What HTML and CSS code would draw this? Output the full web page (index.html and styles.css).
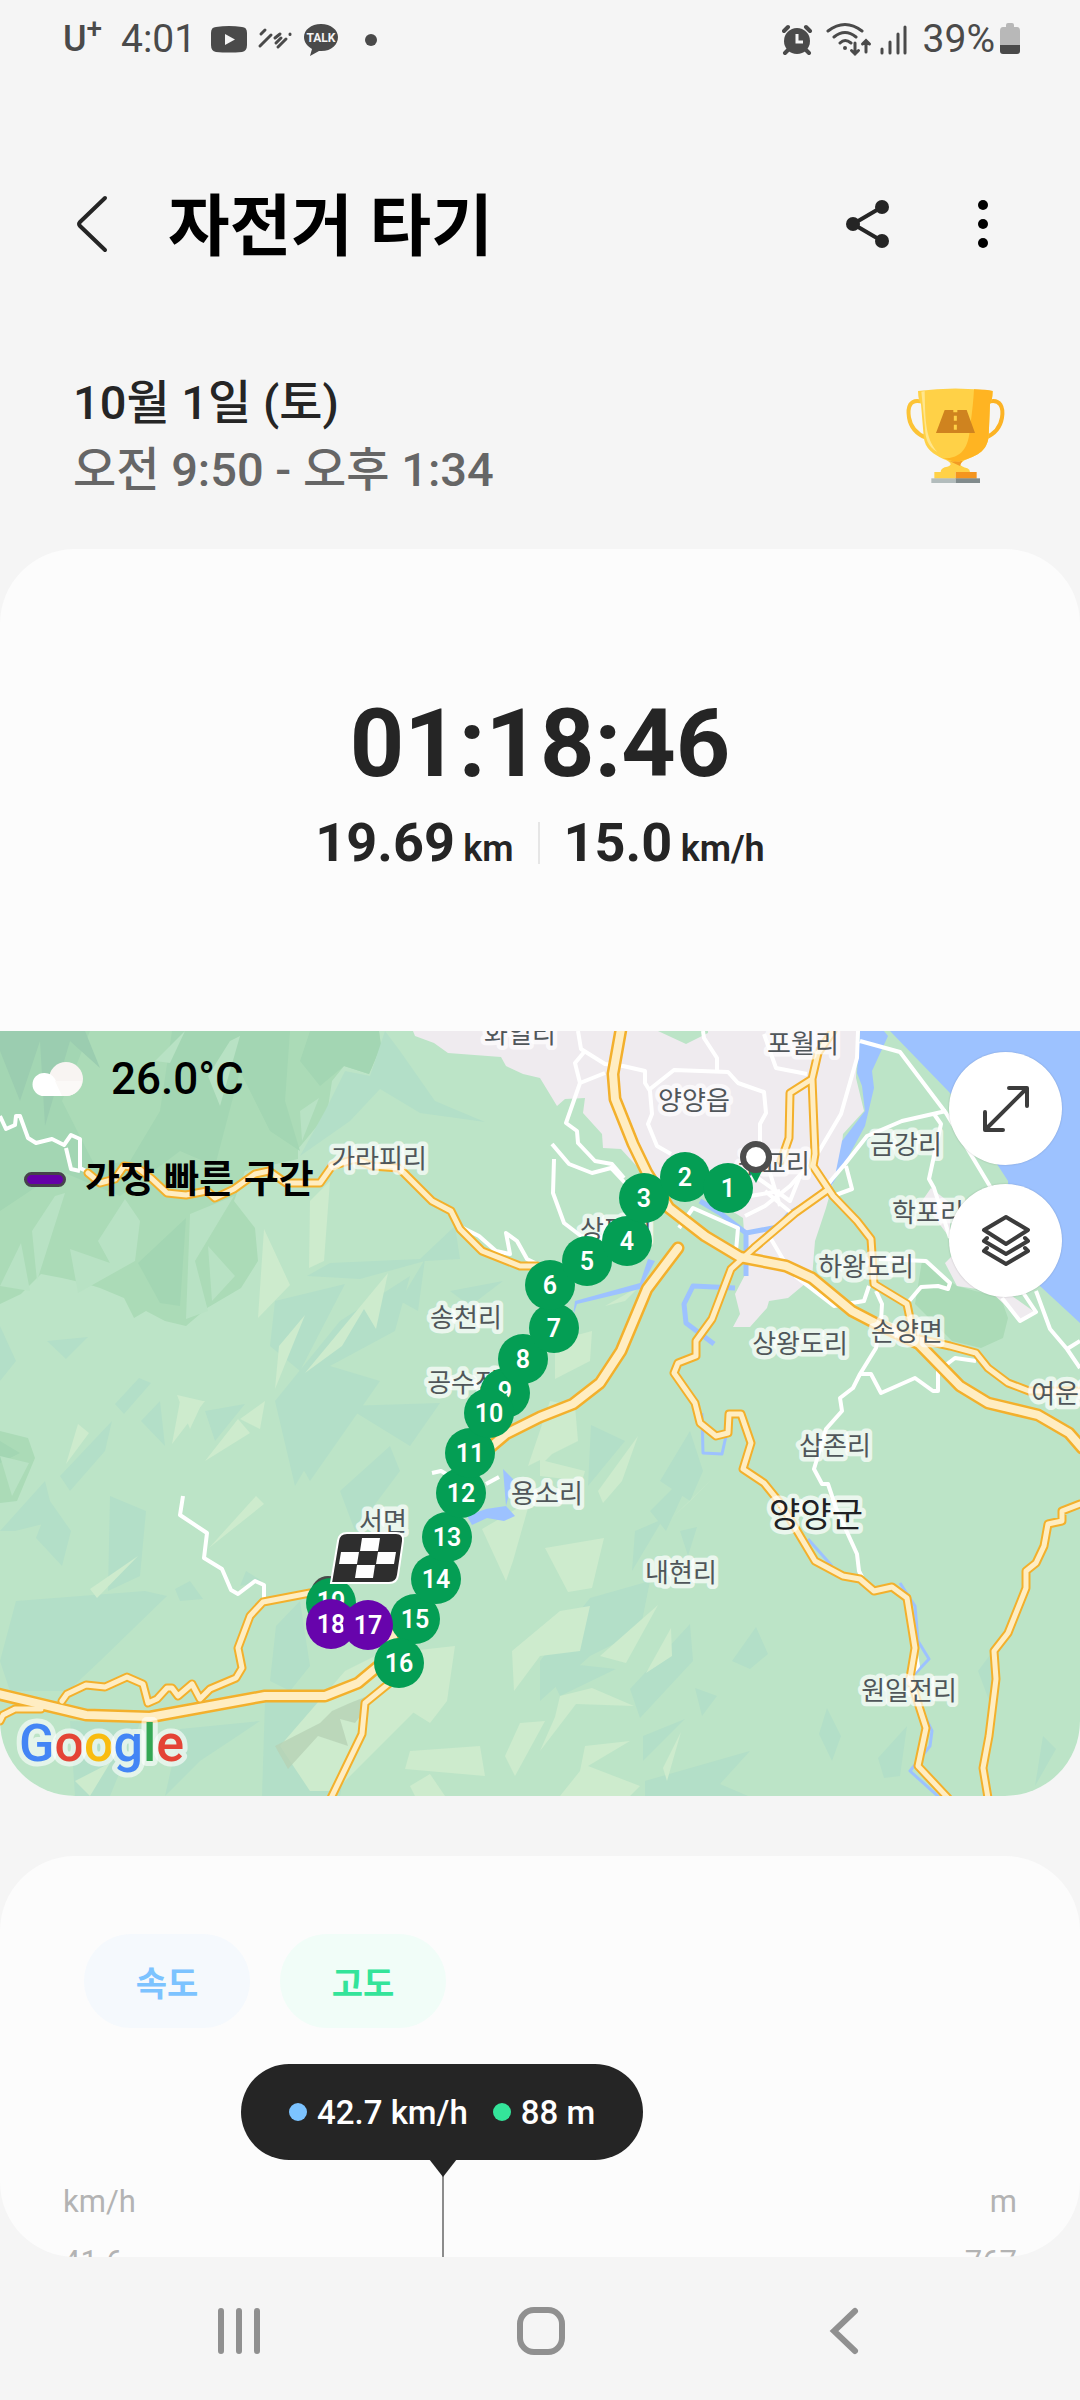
FILE: index.html
```html
<!DOCTYPE html>
<html lang="ko">
<head>
<meta charset="utf-8">
<meta name="viewport" content="width=device-width, initial-scale=1">
<title>자전거 타기</title>
<link rel="stylesheet" href="styles.css">
</head>
<body>
<div class="status">
  <div class="status-side">
    <span class="carrier">U<sup>+</sup></span>
    <span class="clock">4:01</span>
    <svg class="status-icons" width="170" height="36" viewBox="0 0 170 36" aria-hidden="true">
      <path fill="#4a4a4a" d="M5 6Q18 4 31 6Q36 6 36 12V24Q36 30 31 31Q18 32 5 31Q0 30 0 24V12Q0 6 5 6Z"/>
      <path fill="#f5f5f5" d="M14 13L24 18.500L14 24Z"/>
      <g stroke="#4a4a4a" stroke-width="3" stroke-linecap="round"><path d="M50 13L54 9M49 25L60 14M64 17L69 13M67 26L75 18M65 22L70 17M79 13V13.500"/></g>
      <path fill="#4a4a4a" d="M110 3C100 3 93 9 93 16C93 21 96 25 101 28L99 35L108 30C120 31 127 24 127 16C127 9 120 3 110 3Z"/>
      <text x="110" y="21" class="talk">TALK</text>
      <circle cx="160" cy="19" r="6" fill="#4a4a4a"/>
    </svg>
  </div>
  <div class="status-side">
    <svg class="status-icons" width="126" height="36" viewBox="0 0 126 36" aria-hidden="true">
      <g fill="none" stroke="#4a4a4a" stroke-linecap="round">
        <circle cx="15" cy="20" r="13" fill="#4a4a4a" stroke="none"/>
        <path stroke-width="4" d="M2 10L6 6M24 6L28 10M6 29L3 32M24 29L27 32"/>
        <path stroke="#f5f5f5" stroke-width="3" stroke-linecap="butt" d="M15 13V21H21"/>
        <path stroke-width="3" d="M46 10Q63 -3 80 10M52 16Q63 7 74 16M58 22Q63 17 69 22"/>
        <circle cx="63" cy="27" r="2" fill="#4a4a4a" stroke="none"/>
        <path stroke-width="3" d="M73 22V33M69.500 29.500L73 33L76.500 29.500M84 31V20M80.500 23L84 19.500L87.500 23M100 28V32M108 21V32M116 13V32M123 6V32"/>
      </g>
    </svg>
    <span class="clock">39%</span>
    <svg class="battery" width="20" height="36" viewBox="0 0 20 36" aria-hidden="true">
      <path fill="#b8b8b8" d="M6 4Q6 2 8 2H12Q14 2 14 4V6H17Q20 6 20 10V24H0V10Q0 6 3 6H6Z"/>
      <path fill="#4a4a4a" d="M0 24H20V30Q20 33 17 33H3Q0 33 0 30Z"/>
    </svg>
  </div>
</div>

<header class="appbar">
  <button class="icon-button" type="button" aria-label="뒤로">
    <svg width="40" height="60" viewBox="0 0 40 60"><path d="M33 4L8 28Q6 30 8 32L33 56" fill="none" stroke="#252525" stroke-width="4" stroke-linecap="round"/></svg>
  </button>
  <h1 class="title">자전거 타기</h1>
  <button class="icon-button share" type="button" aria-label="공유">
    <svg width="50" height="54" viewBox="0 0 50 54"><path d="M40 10L11 27L40 44" fill="none" stroke="#252525" stroke-width="4"/><g fill="#252525"><circle cx="40" cy="10" r="7"/><circle cx="11" cy="27" r="7"/><circle cx="40" cy="44" r="7"/></g></svg>
  </button>
  <button class="icon-button" type="button" aria-label="더보기">
    <svg width="50" height="54" viewBox="0 0 50 54"><circle cx="25" cy="8" r="5"/><circle cx="25" cy="27" r="5"/><circle cx="25" cy="46" r="5"/></svg>
  </button>
</header>

<section class="session">
  <div class="session-text">
    <p class="date">10월 1일 (토)</p>
    <p class="period">오전 9:50 - 오후 1:34</p>
  </div>
  <svg class="trophy" viewBox="0 0 390 390" role="img" aria-label="트로피">
    <g fill="none" stroke="#fcc335" stroke-width="12"><path d="M92 91C60 84 52 108 57 140C62 170 82 190 108 200"/></g>
    <path d="M300 91C330 84 341 108 336 140C331 170 312 190 286 200" fill="none" stroke="#fcb325" stroke-width="12"/>
    <path fill="#ffd147" d="M84 60Q196 45 308 60Q307 90 300 100L296 195C292 240 262 252 232 264Q214 272 210 280Q214 288 232 292Q240 296 240 303H152Q152 294 164 289Q182 286 182 279Q178 270 160 264C132 250 104 236 101 195L93 100Q85 90 84 60Z"/>
    <path fill="#ffb422" d="M252 55Q290 55 308 60Q307 90 300 100L296 195C292 240 262 252 232 264Q214 270 195 272Q175 268 160 262C215 262 236 230 240 170Q250 100 252 55Z"/>
    <path fill="#f29b24" d="M178 270Q200 274 218 269Q212 276 210 285Z"/>
    <path fill="#ffe68c" d="M94 62L104 60C106 140 104 200 142 243C112 225 106 200 105 170Z"/>
    <path fill="#cf831f" d="M164 117H190V124H202V117H230L255 186H138Z"/>
    <path stroke="#ffd147" stroke-width="9" d="M196 134V149M196 161V176"/>
    <path fill="#ffd147" d="M133 303H197V323H133Z"/><path fill="#f4951f" d="M197 303H260V323H197Z"/>
    <path fill="#b2bcbc" d="M124 322H197V336H124Z"/><path fill="#818b8c" d="M197 322H270V336H197Z"/>
  </svg>
</section>

<main class="content">
<section class="card summary">
  <div class="totals">
    <p class="duration">01:18:46</p>
    <div class="metrics">
      <p class="metric">19.69 <span class="unit">km</span></p>
      <span class="divider"></span>
      <p class="metric">15.0 <span class="unit">km/h</span></p>
    </div>
  </div>
  <div class="map">
    <svg class="map-canvas" viewBox="0 1030 1080 765" role="img" aria-label="경로 지도">
      <rect y="1030" width="1080" height="765" fill="#bce4c7"/>
      <!-- wooded hills -->
      <path fill="#abdbb7" d="M0 1030H379L381 1045L369 1073L344 1065L332 1080L327 1113L298 1148V1158L245 1170L234 1200L255 1227L258 1260L241 1287L207 1307L186 1325L165 1320L146 1310L134 1317L124 1297L100 1287L84 1282L62 1277L41 1273L21 1293L0 1303ZM0 1430L28 1437L35 1457L17 1500L0 1502ZM922 1260L915 1303L952 1340L981 1347L1003 1337L1008 1317L1001 1297L957 1285Z"/>
      <path fill="#a3d6b3" d="M0 1030H90L62 1100L95 1165L130 1160L160 1110L172 1030H290L285 1100L300 1150L270 1130L240 1070L215 1165L180 1150L120 1195L60 1170L0 1210ZM310 1030H379L381 1045L369 1073L344 1065L320 1085L300 1060ZM138 1262L186 1217L180 1305L160 1302ZM0 1440L20 1452L0 1462Z"/>
      <path fill="#9bcdb0" d="M0 1030H85L100 1067L70 1040L45 1125L40 1040L20 1100L0 1050Z"/>
      <path fill="#b8e2c4" d="M32 1230L55 1195L65 1192L37 1280ZM98 1240L125 1198L140 1220L135 1260L78 1292L70 1248L110 1262ZM0 1285L21 1242L30 1290ZM190 1213L234 1195L195 1260L208 1310L186 1318ZM208 1245L235 1275L212 1300ZM0 1455L29 1462L12 1495ZM300 1110L319 1097L302 1140ZM230 1040L240 1035L220 1105L208 1075ZM155 1060L185 1030L170 1062Z"/>
      <!-- blue-green facets -->
      <path fill="#b3dfc8" d="M385 1030L400 1050L435 1100L485 1121L420 1112L380 1088L350 1120L300 1155L325 1110L345 1070L370 1075ZM307 1275L330 1262L420 1258L455 1225L460 1258L425 1260L360 1278ZM275 1300L345 1283L300 1370L270 1345ZM47 1340L88 1336L66 1358ZM0 1325L16 1360L0 1380ZM340 1320L410 1275L395 1330L330 1365L380 1380L310 1480L290 1445L275 1400ZM400 1300L425 1258L418 1310ZM450 1290L503 1280L470 1305ZM115 1403L139 1377L151 1382L124 1413ZM60 1475L112 1420L105 1450L70 1490ZM0 1530L45 1480L55 1520L15 1530ZM36 1537L50 1500L71 1530L62 1565ZM110 1495L146 1510L140 1575L108 1590ZM16 1600L145 1590L167 1595L100 1660L68 1690H10L0 1660ZM141 1420L160 1400L165 1445ZM205 1410L245 1403L215 1440ZM275 1400H345L295 1485ZM345 1405L440 1402L410 1445ZM340 1490L390 1445L400 1470L355 1530ZM175 1588L190 1580L203 1598L180 1600ZM240 1585L246 1570L262 1580ZM276 1625L300 1600L310 1665L290 1690L270 1680ZM70 1720L140 1722L110 1795H75ZM265 1700L360 1690L340 1795H262ZM180 1728L260 1720L200 1760L165 1795ZM591 1424L625 1440L588 1485ZM660 1480L690 1430L703 1470L690 1500ZM650 1510L680 1480L690 1478L666 1530ZM635 1530L663 1518L632 1570ZM680 1530L697 1526L688 1555ZM590 1597L650 1580L640 1630L590 1655L540 1700V1660ZM630 1688L690 1623L693 1660L640 1717ZM543 1660L616 1668L560 1695ZM732 1660L756 1626L768 1653L750 1668ZM695 1687L717 1695L702 1715ZM819 1733L827 1707L841 1735L832 1760ZM878 1757L907 1725L900 1775L884 1777ZM643 1735L685 1718L643 1760ZM645 1780L750 1750L720 1783L748 1795H645ZM978 1670L993 1650V1710ZM1035 1785L1043 1735L1056 1748Z"/>
      <!-- light facets -->
      <path fill="#cdebcd" d="M310 1200L330 1180L324 1260L309 1267ZM264 1228L290 1284L258 1317ZM305 1372L388 1272L376 1328L364 1308L342 1345ZM275 1388L279 1345L305 1314ZM177 1394L203 1400L190 1428ZM240 1418L265 1400L260 1428ZM66 1463L78 1423L89 1432ZM180 1400L205 1400L172 1443ZM205 1460L238 1418L250 1432ZM209 1547L256 1495L264 1503ZM90 1588L138 1555L97 1597ZM280 1745L345 1670L385 1650L425 1700L335 1790H310ZM410 1650L455 1645L447 1700L430 1722L395 1700ZM482 1528L530 1500L513 1560L506 1580ZM528 1465L550 1400L575 1405L578 1440ZM540 1440L560 1445L545 1460L585 1470L582 1480L540 1475ZM512 1650L560 1610L590 1605L580 1650L540 1655L514 1690ZM545 1547L604 1537L592 1587L568 1591ZM598 1490L638 1435L622 1480L603 1502ZM671 1518L712 1478L690 1500ZM600 1655L658 1604L626 1662ZM646 1672L671 1627L672 1655ZM560 1695L592 1687L634 1705L576 1703L540 1750L555 1716ZM410 1750L480 1745L485 1775L405 1768ZM505 1755L520 1722L545 1720L515 1775ZM585 1745L630 1740L588 1765L640 1785L630 1795H560L580 1770ZM410 1785L430 1773L445 1795H415ZM605 1305L640 1285L625 1300ZM555 1340L592 1330L590 1360L555 1378ZM663 1767L681 1731L667 1780ZM75 1780L110 1762L90 1795Z"/>
      <path fill="#b7d2b5" d="M275 1745L320 1722L332 1710L350 1702L380 1690L355 1722L340 1718L348 1745L318 1735L288 1768Z" opacity=".8"/>
      <!-- built-up area -->
      <path fill="#efebef" d="M413 1030L415 1035L434 1042L448 1052L501 1056L506 1065L523 1073L540 1077L557 1105L565 1098L585 1097L583 1112L602 1133L603 1147L621 1148L643 1172L670 1195L705 1193L743 1217L747 1270L735 1293L740 1313L733 1326H750L767 1307L769 1300L788 1297L812 1277L815 1240L826 1207L841 1153L843 1133L864 1110L856 1077L858 1030ZM931 1187L950 1202V1237L922 1200ZM945 1262L957 1250L975 1275L1005 1290L1036 1312L1022 1320L990 1290L957 1285Z"/>
      <path fill="#bce4c7" d="M658 1030L686 1043L708 1032V1030Z"/>
      <!-- sea and rivers -->
      <path fill="#9dc2ff" d="M890 1030H1080V1322L1040 1285L1010 1230L1008 1180L995 1160L950 1092ZM860 1030H884L888 1035L872 1070L874 1087L865 1125L846 1160L826 1194L835 1175L842 1140L865 1110L862 1085L857 1072ZM503 1468L513 1478L506 1505L515 1515L504 1520L487 1517L472 1524L467 1515L486 1508L506 1505ZM575 1300L640 1282L648 1258L655 1260L640 1288L577 1303L573 1315Z"/>
      <g class="river"><path d="M826 1192L790 1212L778 1226L746 1232L720 1212L700 1200M746 1232V1275"/><path d="M735 1287L693 1285L684 1303L686 1322L714 1343"/></g>
      <g class="river narrow"><path d="M702 1412L703 1452L722 1453L726 1435M808 1538L832 1565M900 1582L915 1605L918 1640L929 1658L910 1678M920 1705L932 1730L930 1745L910 1770L940 1797"/></g>
      <!-- minor roads -->
      <g class="lane">
        <path d="M0 1115L6 1128L15 1124L16 1115L20 1115L28 1137L36 1142L52 1138L64 1144L71 1134L80 1138V1167L90 1172M80 1170L71 1168L66 1147"/>
        <path d="M463 1227L479 1235L496 1250L510 1253L506 1232L517 1240L527 1258L537 1263"/>
        <path d="M183 1495L180 1514L207 1532L204 1557L222 1568L231 1589L238 1593L255 1580L264 1584V1600M432 1472L441 1470L455 1478M486 1483L499 1476"/>
        <path d="M578 1030L581 1048L605 1063L623 1065L645 1070V1082L650 1090L652 1113L648 1123L657 1145L671 1153M585 1050L575 1062L580 1082L605 1072M580 1082L566 1122L577 1130L578 1142L595 1160L612 1163L624 1177M552 1143L569 1163L592 1172L611 1167L626 1183M554 1158L553 1192L564 1222L581 1235L650 1238"/>
        <path d="M650 1088L674 1069L728 1071L738 1082L764 1091L766 1112L760 1123V1153M703 1030L704 1037L717 1057V1070M764 1033L776 1067L807 1073"/>
        <path d="M858 1030L857 1057L841 1113L815 1157L790 1185L765 1205L745 1215M860 1040L900 1051L946 1112L991 1187M946 1110L902 1120L867 1135L845 1163L828 1183M846 1165L852 1188L833 1195M934 1113L941 1123L929 1178L934 1187L950 1237"/>
        <path d="M755 1175L790 1200L800 1175M765 1190L795 1215M750 1195L780 1190M770 1172L780 1205"/>
        <path d="M679 1227L693 1207L738 1227L736 1250M771 1238L784 1260M879 1258L926 1260L950 1282L948 1288L938 1285L921 1286L905 1305M869 1285L864 1300L834 1305L795 1275"/>
        <path d="M876 1290L882 1303L881 1320L876 1347L860 1373L853 1387L840 1397L842 1410L826 1428L814 1468L822 1483H828L836 1507L857 1553L859 1570L862 1576M860 1373H871L881 1392L915 1377L933 1390H938V1370L955 1357L976 1360"/>
        <path d="M1036 1290L1050 1328L1067 1348L1080 1340M1067 1348L1080 1367M1002 1297L1020 1320L1036 1311L1022 1290M915 1647L918 1665L910 1675"/>
      </g>
      <!-- highways: casing, then surface -->
      <g class="casing">
        <path id="r1" d="M88 1172L100 1182L115 1178L124 1165L138 1167L152 1178L167 1192L186 1194L207 1190L215 1197L234 1188L255 1173L269 1170L286 1182H320L332 1165L355 1158L372 1165L399 1167L432 1200L451 1210L460 1228L482 1250L520 1265H537"/>
        <path id="r2" d="M833 1030L818 1052L812 1078L790 1092L789 1137L781 1160M812 1078L815 1153L813 1165L833 1195L857 1220L871 1238L874 1283L907 1303L914 1337L950 1345L976 1352L988 1367L1008 1382L1029 1390H1080"/>
        <path id="r3" d="M826 1190L795 1212L754 1247L731 1268L712 1318L696 1340V1355L678 1362L674 1372L695 1402L700 1422L716 1435L728 1432L729 1413H741L751 1442L743 1468L764 1482L781 1503L815 1560L843 1575L860 1578L874 1590L892 1586L907 1597L915 1647L910 1677L926 1727L918 1765L948 1797"/>
        <path id="r4" d="M1080 1503L1062 1510V1520L1048 1523L1044 1545L1036 1562L1026 1570V1587L1008 1632L994 1650L996 1678L989 1735L983 1767L988 1797"/>
        <path id="r5" d="M62 1700L67 1693L86 1684L105 1686L127 1676L143 1683L148 1702L157 1698L167 1687H172L178 1695L192 1683L200 1698L210 1688L236 1677L242 1667L238 1647L250 1615L263 1601L310 1592M0 1720L3 1714L15 1708H41M392 1680L365 1702L362 1733L331 1797"/>
      </g>
      <g class="casing wide">
        <path id="r6" d="M621 1028L613 1073L615 1098L633 1143L647 1172L669 1207L705 1235L740 1256L786 1265L812 1277L852 1310L877 1323L919 1343L960 1385L988 1402L1038 1414L1069 1432L1082 1447"/>
        <path id="r7" d="M678 1247L647 1288L621 1350L600 1382L573 1403L540 1416L506 1433L480 1455"/>
        <path id="r8" d="M-2 1693L86 1714L150 1716L265 1695H325L358 1682L382 1662L394 1633"/>
      </g>
      <g class="surface"><use href="#r1"/><use href="#r2"/><use href="#r3"/><use href="#r4"/><use href="#r5"/></g>
      <g class="surface wide"><use href="#r6"/><use href="#r7"/><use href="#r8"/></g>
      <!-- place names -->
      <g class="place">
        <text x="520" y="1042">화일리</text><text x="379" y="1167">가라피리</text><text x="803" y="1052">포월리</text>
        <text x="694" y="1109">양양읍</text><text x="774" y="1172">구교리</text><text x="906" y="1153">금강리</text>
        <text x="928" y="1221">학포리</text><text x="616" y="1238">상평리</text><text x="866" y="1275">하왕도리</text>
        <text x="907" y="1340">손양면</text><text x="800" y="1352">상왕도리</text><text x="1079" y="1402">여운포리</text>
        <text x="466" y="1326">송천리</text><text x="475" y="1391">공수전리</text><text x="547" y="1502">용소리</text>
        <text x="383" y="1530">서면</text><text x="835" y="1454">삽존리</text><text x="681" y="1581">내현리</text>
        <text x="909" y="1699">원일전리</text><text x="816" y="1526" class="county">양양군</text>
      </g>
      <!-- kilometre markers -->
      <path fill="#049e54" d="M748 1168L762 1170L756 1182Z"/>
      <circle cx="328" cy="1592" r="17" fill="#4a4a4a"/>
      <g class="km">
        <circle cx="331" cy="1602" r="25"/><text x="331" y="1609">19</text>
        <circle class="fast" cx="331" cy="1623" r="25"/><text x="331" y="1632">18</text>
        <circle cx="415" cy="1618" r="25"/><text x="415" y="1627">15</text>
        <circle class="fast" cx="368" cy="1624" r="25"/><text x="368" y="1633">17</text>
        <circle cx="399" cy="1662" r="25"/><text x="399" y="1671">16</text>
        <circle cx="436" cy="1578" r="25"/><text x="436" y="1587">14</text>
        <circle cx="447" cy="1536" r="25"/><text x="447" y="1545">13</text>
        <circle cx="461" cy="1492" r="25"/><text x="461" y="1501">12</text>
        <circle cx="470" cy="1452" r="25"/><text x="470" y="1461">11</text>
        <circle cx="505" cy="1392" r="25"/><text x="505" y="1399">9</text>
        <circle cx="489" cy="1412" r="25"/><text x="489" y="1421">10</text>
        <circle cx="523" cy="1358" r="25"/><text x="523" y="1367">8</text>
        <circle cx="554" cy="1327" r="25"/><text x="554" y="1336">7</text>
        <circle cx="550" cy="1284" r="25"/><text x="550" y="1293">6</text>
        <circle cx="587" cy="1260" r="25"/><text x="587" y="1269">5</text>
        <circle cx="627" cy="1240" r="25"/><text x="627" y="1249">4</text>
        <circle cx="644" cy="1197" r="25"/><text x="644" y="1206">3</text>
        <circle cx="685" cy="1176" r="25"/><text x="685" y="1185">2</text>
        <circle cx="728" cy="1187" r="25"/><text x="728" y="1196">1</text>
      </g>
      <circle cx="756" cy="1156" r="13" fill="#fff" stroke="#4d4d4d" stroke-width="6"/>
      <path fill="#2e2e2e" stroke="#fff" stroke-width="2" d="M347 1532H396Q404 1532 403 1540L398 1574Q397 1582 389 1582H331L338 1540Q339 1532 347 1532Z"/>
      <path fill="#fff" d="M362 1537H380L378 1550H360ZM341 1551H359L357 1563H339ZM378 1551H396L394 1563H376ZM357 1564H375L373 1577H355Z"/>
      <text x="19" y="1760" class="google"><tspan fill="#4385f5">G</tspan><tspan fill="#e44436">o</tspan><tspan fill="#f9bc10">o</tspan><tspan fill="#4385f5">g</tspan><tspan fill="#34a753">l</tspan><tspan fill="#e44436">e</tspan></text>
    </svg>
    <div class="map-info">
      <p class="weather">
        <svg width="53" height="36" viewBox="0 0 53 36" aria-hidden="true"><circle cx="34" cy="18" r="17" fill="#f8f4f2"/><path fill="#fff" d="M12 12A12 12 0 0 1 23 18Q26 26 35 35H12A11 11 0 0 1 12 12Z"/><path fill="#fbf9f7" d="M23 20L30 35H35A17 17 0 0 0 50 20Z"/></svg>
        26.0°C
      </p>
      <p class="legend"><span class="swatch"></span>가장 빠른 구간</p>
    </div>
    <div class="map-tools">
      <button class="round" type="button" aria-label="지도 확대">
        <svg width="50" height="50" viewBox="0 0 50 50"><path d="M5 45L45 5M28 4H46V22M4 28V46H22"/></svg>
      </button>
      <button class="round" type="button" aria-label="지도 종류">
        <svg width="52" height="54" viewBox="0 0 52 54"><path d="M26 3L48 16L26 30L4 16ZM7 24L4 27L26 40L48 27L45 24M7 34L4 37L26 50L48 37L45 34"/></svg>
      </button>
    </div>
  </div>
</section>

<section class="card graph">
  <div class="chips">
    <button class="chip speed" type="button">속도</button>
    <button class="chip altitude" type="button">고도</button>
  </div>
  <div class="chart">
    <div class="axis"><span>km/h</span><span>41.6</span></div>
    <div class="axis right"><span>m</span><span>767</span></div>
    <span class="cursor"></span>
    <p class="tooltip"><span class="dot blue"></span><span>42.7 km/h</span><span class="dot green"></span><span>88 m</span></p>
  </div>
</section>
</main>

<nav class="navbar">
  <button class="icon-button" type="button" aria-label="최근 앱"><svg width="60" height="60" viewBox="0 0 60 60"><path d="M12 10V50M30 10V50M48 10V50"/></svg></button>
  <button class="icon-button" type="button" aria-label="홈"><svg width="60" height="60" viewBox="0 0 60 60"><rect x="9" y="9" width="42" height="42" rx="14"/></svg></button>
  <button class="icon-button" type="button" aria-label="이전"><svg width="60" height="60" viewBox="0 0 60 60"><path d="M42 10L21 30L42 50"/></svg></button>
</nav>
</body>
</html>
```
FILE: styles.css
```css
* { box-sizing: border-box; margin: 0; padding: 0; }

body {
  min-height: 100vh;
  display: flex;
  flex-direction: column;
  background: #f5f5f5;
  color: #252525;
  font-family: Roboto, "Noto Sans CJK KR", sans-serif;
}

button { border: 0; background: none; font: inherit; color: inherit; cursor: pointer; }
svg { display: block; }

/* status bar */
.status {
  display: flex;
  justify-content: space-between;
  height: 78px;
  padding: 0 60px 0 63px;
  color: #4a4a4a;
}
.status-side { display: flex; align-items: center; }
.carrier { width: 58px; font-size: 36px; line-height: 40px; font-weight: 500; }
.carrier sup { font-size: 28px; line-height: 20px; }
.clock { font-size: 39px; line-height: 40px; }
.status-icons { margin: 0 15px; }
.battery { margin-left: 5px; }
.talk { fill: #f5f5f5; font-size: 12px; font-weight: 700; text-anchor: middle; }

/* app bar */
.appbar {
  display: flex;
  align-items: center;
  height: 150px;
  margin: 71px 0 70px;
  padding: 0 72px;
}
.icon-button { display: flex; align-items: center; justify-content: center; }
.title { flex: 1; margin-left: 56px; padding-top: 6px; color: #000; font-size: 67px; line-height: 90px; font-weight: 700; }
.share { margin-right: 66px; }

/* session */
.session {
  display: flex;
  justify-content: space-between;
  align-items: center;
  margin-bottom: 46px;
  padding: 0 60px 0 73px;
  font-size: 47px;
  line-height: 67px;
  font-weight: 500;
}
.period { color: #666; }
.trophy { width: 130px; height: 130px; }

/* cards */
.content { flex: 1; display: flex; flex-direction: column; gap: 60px; }
.card { background: #fcfcfc; border-radius: 75px; overflow: hidden; }
.totals { padding: 135px 0 149px; text-align: center; }
.duration { font-size: 95px; line-height: 120px; font-weight: 700; }
.metrics { display: flex; justify-content: center; align-items: center; gap: 24px; }
.metric { font-size: 54px; line-height: 78px; font-weight: 700; }
.unit { margin-left: -5px; font-size: 36px; line-height: 40px; font-weight: 600; }
.divider { width: 2px; height: 42px; background: #e6e6e6; }

/* map */
.map { position: relative; }
.map-canvas { width: 100%; height: auto; }
.lane, .river, .casing, .surface { fill: none; stroke-linejoin: round; }
.lane { stroke: #fff; stroke-width: 4px; }
.river { stroke: #9dc2ff; stroke-width: 5px; }
.river.narrow { stroke-width: 3px; }
.casing { stroke: #f3b02c; stroke-width: 9px; stroke-linecap: round; }
.casing.wide { stroke-width: 13px; }
.surface { stroke: #ffedc2; stroke-width: 5px; stroke-linecap: round; }
.surface.wide { stroke-width: 8px; }
.place {
  fill: #50565a;
  stroke: rgba(255, 255, 255, .7);
  stroke-width: 9px;
  stroke-linejoin: round;
  paint-order: stroke;
  font-family: "Noto Sans CJK KR", sans-serif;
  font-size: 26px;
  text-anchor: middle;
}
.county { fill: #202124; font-size: 34px; }
.km { fill: #049e54; }
.km .fast { fill: #6704ac; }
.km text { fill: #fff; font-size: 25px; font-weight: 600; text-anchor: middle; }
.google {
  stroke: rgba(255, 255, 255, .6);
  stroke-width: 10px;
  stroke-linejoin: round;
  paint-order: stroke;
  font-size: 52px;
  font-weight: 500;
}
.map-info { position: absolute; top: 20px; left: 24px; color: #000; }
.weather { display: flex; align-items: center; gap: 26px; padding-left: 8px; font-size: 44px; line-height: 56px; font-weight: 500; }
.legend { display: flex; align-items: center; gap: 19px; margin-top: 44px; font-size: 38px; line-height: 56px; font-weight: 700; }
.swatch { width: 42px; height: 15px; border: 3px solid #46424c; border-radius: 8px; background: #6500a8; }
.map-tools { position: absolute; top: 21px; right: 18px; display: grid; gap: 19px; }
.round {
  display: grid;
  place-items: center;
  width: 113px;
  height: 113px;
  border-radius: 50%;
  background: #fff;
  box-shadow: 0 0 2px rgba(0, 0, 0, .2);
}
.round path { fill: none; stroke: #3c3c3c; stroke-width: 4px; stroke-linecap: round; stroke-linejoin: round; }

/* graph */
.graph { flex: 1; display: flex; flex-direction: column; }
.chips { display: flex; gap: 30px; padding: 78px 84px 0; }
.chip { width: 166px; height: 94px; border-radius: 47px; font-size: 34px; font-weight: 700; }
.speed { background: #f5f9fd; color: #7cc3ff; }
.altitude { background: #f1fdf8; color: #34e49a; }
.chart {
  position: relative;
  flex: 1 0 229px;
  height: 229px;
  display: flex;
  justify-content: space-between;
  padding: 154px 63px 0;
  overflow: hidden;
}
.axis { display: grid; align-content: start; gap: 20px; height: 0; color: #b3b3b3; font-size: 31px; line-height: 40px; }
.axis.right { text-align: right; }
.cursor { position: absolute; top: 130px; bottom: 0; left: 442px; width: 2px; background: #8c8c8c; }
.tooltip {
  position: absolute;
  top: 36px;
  left: 241px;
  display: flex;
  align-items: center;
  height: 96px;
  padding: 0 48px;
  border-radius: 48px;
  background: #252525;
  color: #fff;
  font-size: 33px;
  font-weight: 500;
  white-space: nowrap;
}
.tooltip::after {
  content: "";
  position: absolute;
  top: 95px;
  left: 188px;
  border: 14px solid transparent;
  border-top: 18px solid #252525;
  border-bottom: 0;
}
.dot { width: 18px; height: 18px; margin-right: 10px; border-radius: 50%; }
.blue { background: #7cc3ff; }
.green { margin-left: 25px; background: #34e49a; }

/* navigation bar */
.navbar { display: flex; justify-content: space-between; align-items: center; height: 144px; padding: 4px 207px 0 209px; }
.navbar path, .navbar rect { fill: none; stroke: #909090; stroke-width: 6px; stroke-linecap: round; }
```
